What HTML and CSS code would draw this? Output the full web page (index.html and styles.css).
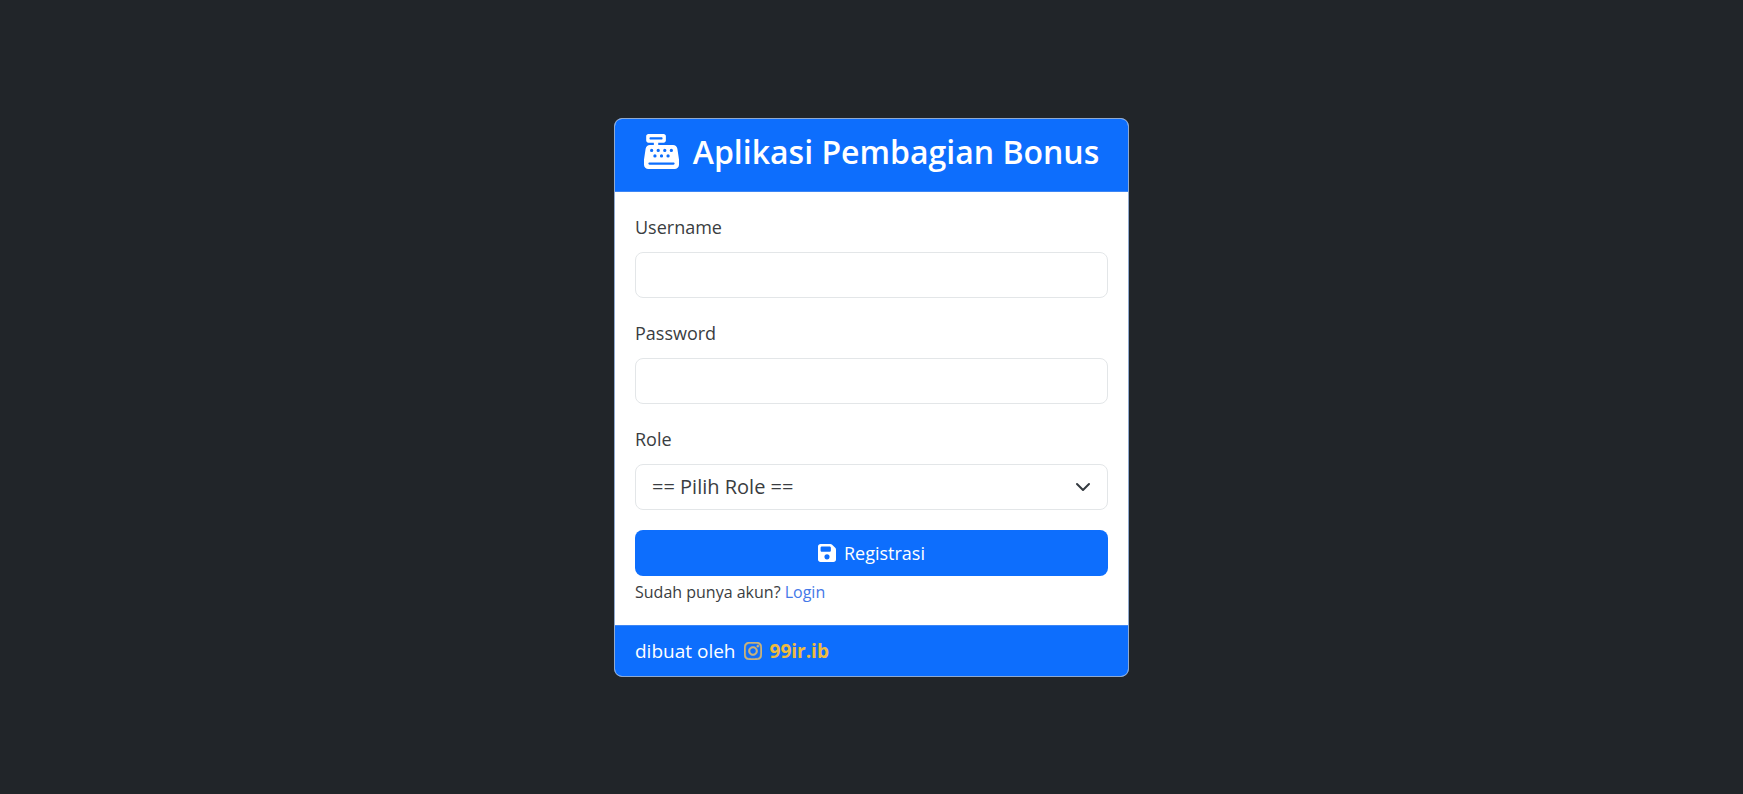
FILE: index.html
```html
<!DOCTYPE html>
<html lang="id">
<head>
<meta charset="utf-8">
<meta name="viewport" content="width=device-width, initial-scale=1">
<title>Aplikasi Pembagian Bonus</title>
<link rel="stylesheet" href="styles.css">
</head>
<body class="page">
<main class="card">
  <header class="card-header">
    <svg class="title-icon" viewBox="0 0 512 512" aria-hidden="true"><path d="M64 0C46.3 0 32 14.3 32 32V96c0 17.7 14.3 32 32 32h80v32H87c-31.6 0-58.5 23.1-63.3 54.4L1.1 364.1C.4 368.8 0 373.6 0 378.4V448c0 35.3 28.7 64 64 64H448c35.3 0 64-28.7 64-64V378.4c0-4.8-.4-9.6-1.1-14.4L488.2 214.4C483.5 183.1 456.6 160 425 160H208V128h80c17.7 0 32-14.3 32-32V32c0-17.7-14.3-32-32-32H64zM96 48H256c8.8 0 16 7.2 16 16s-7.2 16-16 16H96c-8.8 0-16-7.2-16-16s7.2-16 16-16zM64 432c0-8.8 7.2-16 16-16H432c8.8 0 16 7.2 16 16s-7.2 16-16 16H80c-8.8 0-16-7.2-16-16zm48-168a24 24 0 1 1 0-48 24 24 0 1 1 0 48zm120-24a24 24 0 1 1 -48 0 24 24 0 1 1 48 0zM160 344a24 24 0 1 1 0-48 24 24 0 1 1 0 48zM328 240a24 24 0 1 1 -48 0 24 24 0 1 1 48 0zM256 344a24 24 0 1 1 0-48 24 24 0 1 1 0 48zM424 240a24 24 0 1 1 -48 0 24 24 0 1 1 48 0zM352 344a24 24 0 1 1 0-48 24 24 0 1 1 0 48z"/></svg>
    <h1 class="title">Aplikasi Pembagian Bonus</h1>
  </header>
  <form class="card-body">
    <div class="field">
      <label class="label" for="username">Username</label>
      <input class="control" type="text" id="username" name="username">
    </div>
    <div class="field">
      <label class="label" for="password">Password</label>
      <input class="control" type="password" id="password" name="password">
    </div>
    <div class="field">
      <label class="label" for="role">Role</label>
      <div class="select-wrap">
        <select class="control select" id="role" name="role">
          <option>== Pilih Role ==</option>
        </select>
        <svg class="chevron" viewBox="0 0 16 16" aria-hidden="true"><path d="m2 5 6 6 6-6"/></svg>
      </div>
    </div>
    <button class="button" type="submit">
      <svg class="icon" viewBox="0 32 448 448" aria-hidden="true"><path d="M64 32C28.7 32 0 60.7 0 96V416c0 35.3 28.7 64 64 64H384c35.3 0 64-28.7 64-64V173.3c0-17-6.7-33.3-18.7-45.3L352 50.7C340 38.7 323.7 32 306.7 32H64zm0 96c0-17.7 14.3-32 32-32H288c17.7 0 32 14.3 32 32v64c0 17.7-14.3 32-32 32H96c-17.7 0-32-14.3-32-32V128zM224 288a64 64 0 1 1 0 128 64 64 0 1 1 0-128z"/></svg>
      <span>Registrasi</span>
    </button>
    <p class="hint">Sudah punya akun? <a class="link" href="#login">Login</a></p>
  </form>
  <footer class="card-footer">
    <span>dibuat oleh</span>
    <a class="author" href="#author">
      <svg class="icon icon-muted" viewBox="0 32 448 448" aria-hidden="true"><path d="M224.1 141c-63.6 0-114.9 51.3-114.9 114.9s51.3 114.9 114.9 114.9S339 319.5 339 255.9 287.7 141 224.1 141zm0 189.6c-41.1 0-74.7-33.5-74.7-74.7s33.5-74.7 74.7-74.7 74.7 33.5 74.7 74.7-33.6 74.7-74.7 74.7zm146.4-194.3c0 14.9-12 26.8-26.8 26.8-14.9 0-26.8-12-26.8-26.8s12-26.8 26.8-26.8 26.8 12 26.8 26.8zm76.1 27.2c-1.7-35.9-9.9-67.7-36.2-93.9-26.2-26.2-58-34.4-93.9-36.2-37-2.1-147.9-2.1-184.9 0-35.8 1.7-67.6 9.9-93.9 36.1s-34.4 58-36.2 93.9c-2.1 37-2.1 147.9 0 184.9 1.7 35.9 9.9 67.7 36.2 93.9s58 34.4 93.9 36.2c37 2.1 147.9 2.1 184.9 0 35.9-1.7 67.7-9.9 93.9-36.2 26.2-26.2 34.4-58 36.2-93.9 2.1-37 2.1-147.8 0-184.8zM398.8 388c-7.8 19.6-22.9 34.7-42.6 42.6-29.5 11.7-99.5 9-132.1 9s-102.7 2.6-132.1-9c-19.6-7.8-34.7-22.9-42.6-42.6-11.7-29.5-9-99.5-9-132.1s-2.6-102.7 9-132.1c7.8-19.6 22.9-34.7 42.6-42.6 29.5-11.7 99.5-9 132.1-9s102.7-2.6 132.1 9c19.6 7.8 34.7 22.9 42.6 42.6 11.7 29.5 9 99.5 9 132.1s2.7 102.7-9 132.1z"/></svg>
      <span>99ir.ib</span>
    </a>
  </footer>
</main>
</body>
</html>
```
FILE: styles.css
```css
*, *::before, *::after { box-sizing: border-box; }

.page {
  margin: 0;
  min-height: 100vh;
  display: flex;
  align-items: center;
  justify-content: center;
  background: #212529;
  color: #3a3d41;
  font-family: "Segoe UI", "Open Sans", "Noto Sans", sans-serif;
  font-size: 18px;
  line-height: 30px;
}

.card {
  width: 100%;
  max-width: 515px;
  overflow: hidden;
  border: 1px solid #8fa9cf;
  border-radius: 8px;
  background: #fff;
}

.card-header {
  display: flex;
  align-items: center;
  justify-content: center;
  gap: 14px;
  padding: 12px 20px 18px;
  border-bottom: 1px solid #3d86f5;
  background: #0d6efd;
  color: #fff;
}

.title {
  margin: 0;
  font-size: 32px;
  line-height: 42px;
  font-weight: 600;
  white-space: nowrap;
}

.title-icon {
  flex: none;
  width: 35px;
  height: 35px;
  fill: currentColor;
}

.card-body { padding: 20px; }

.field { margin-bottom: 20px; }

.label {
  display: block;
  margin-bottom: 10px;
}

.control {
  display: block;
  width: 100%;
  height: 46px;
  padding: 0 16px;
  border: 1px solid #e3e6e8;
  border-radius: 8px;
  background: #fff;
  color: inherit;
  font: inherit;
}

.select-wrap { position: relative; }

.select {
  appearance: none;
  font-size: 20px;
}

.chevron {
  position: absolute;
  top: 15px;
  right: 17px;
  width: 16px;
  height: 16px;
  fill: none;
  stroke: #343a40;
  stroke-width: 2;
  stroke-linecap: round;
  stroke-linejoin: round;
  pointer-events: none;
}

.button {
  display: flex;
  align-items: center;
  justify-content: center;
  gap: 8px;
  width: 100%;
  height: 46px;
  padding: 0;
  border: 0;
  border-radius: 8px;
  background: #0d6efd;
  color: #fff;
  font: inherit;
  cursor: pointer;
}

.icon {
  flex: none;
  width: 18px;
  height: 18px;
  fill: currentColor;
}

.icon-muted {
  color: #ccb37a;
  stroke: currentColor;
  stroke-width: 12;
}

.hint {
  margin: 3px 0 0;
  font-size: 16px;
  line-height: 26px;
}

.link {
  color: #4478e8;
  text-decoration: none;
}

.card-footer {
  display: flex;
  align-items: center;
  gap: 8px;
  padding: 10px 20px;
  border-top: 1px solid #3d86f5;
  background: #0d6efd;
  color: #fff;
  font-size: 19px;
}

.author {
  display: flex;
  align-items: center;
  gap: 8px;
  color: #edbb40;
  font-weight: 700;
  text-decoration: none;
}
```
